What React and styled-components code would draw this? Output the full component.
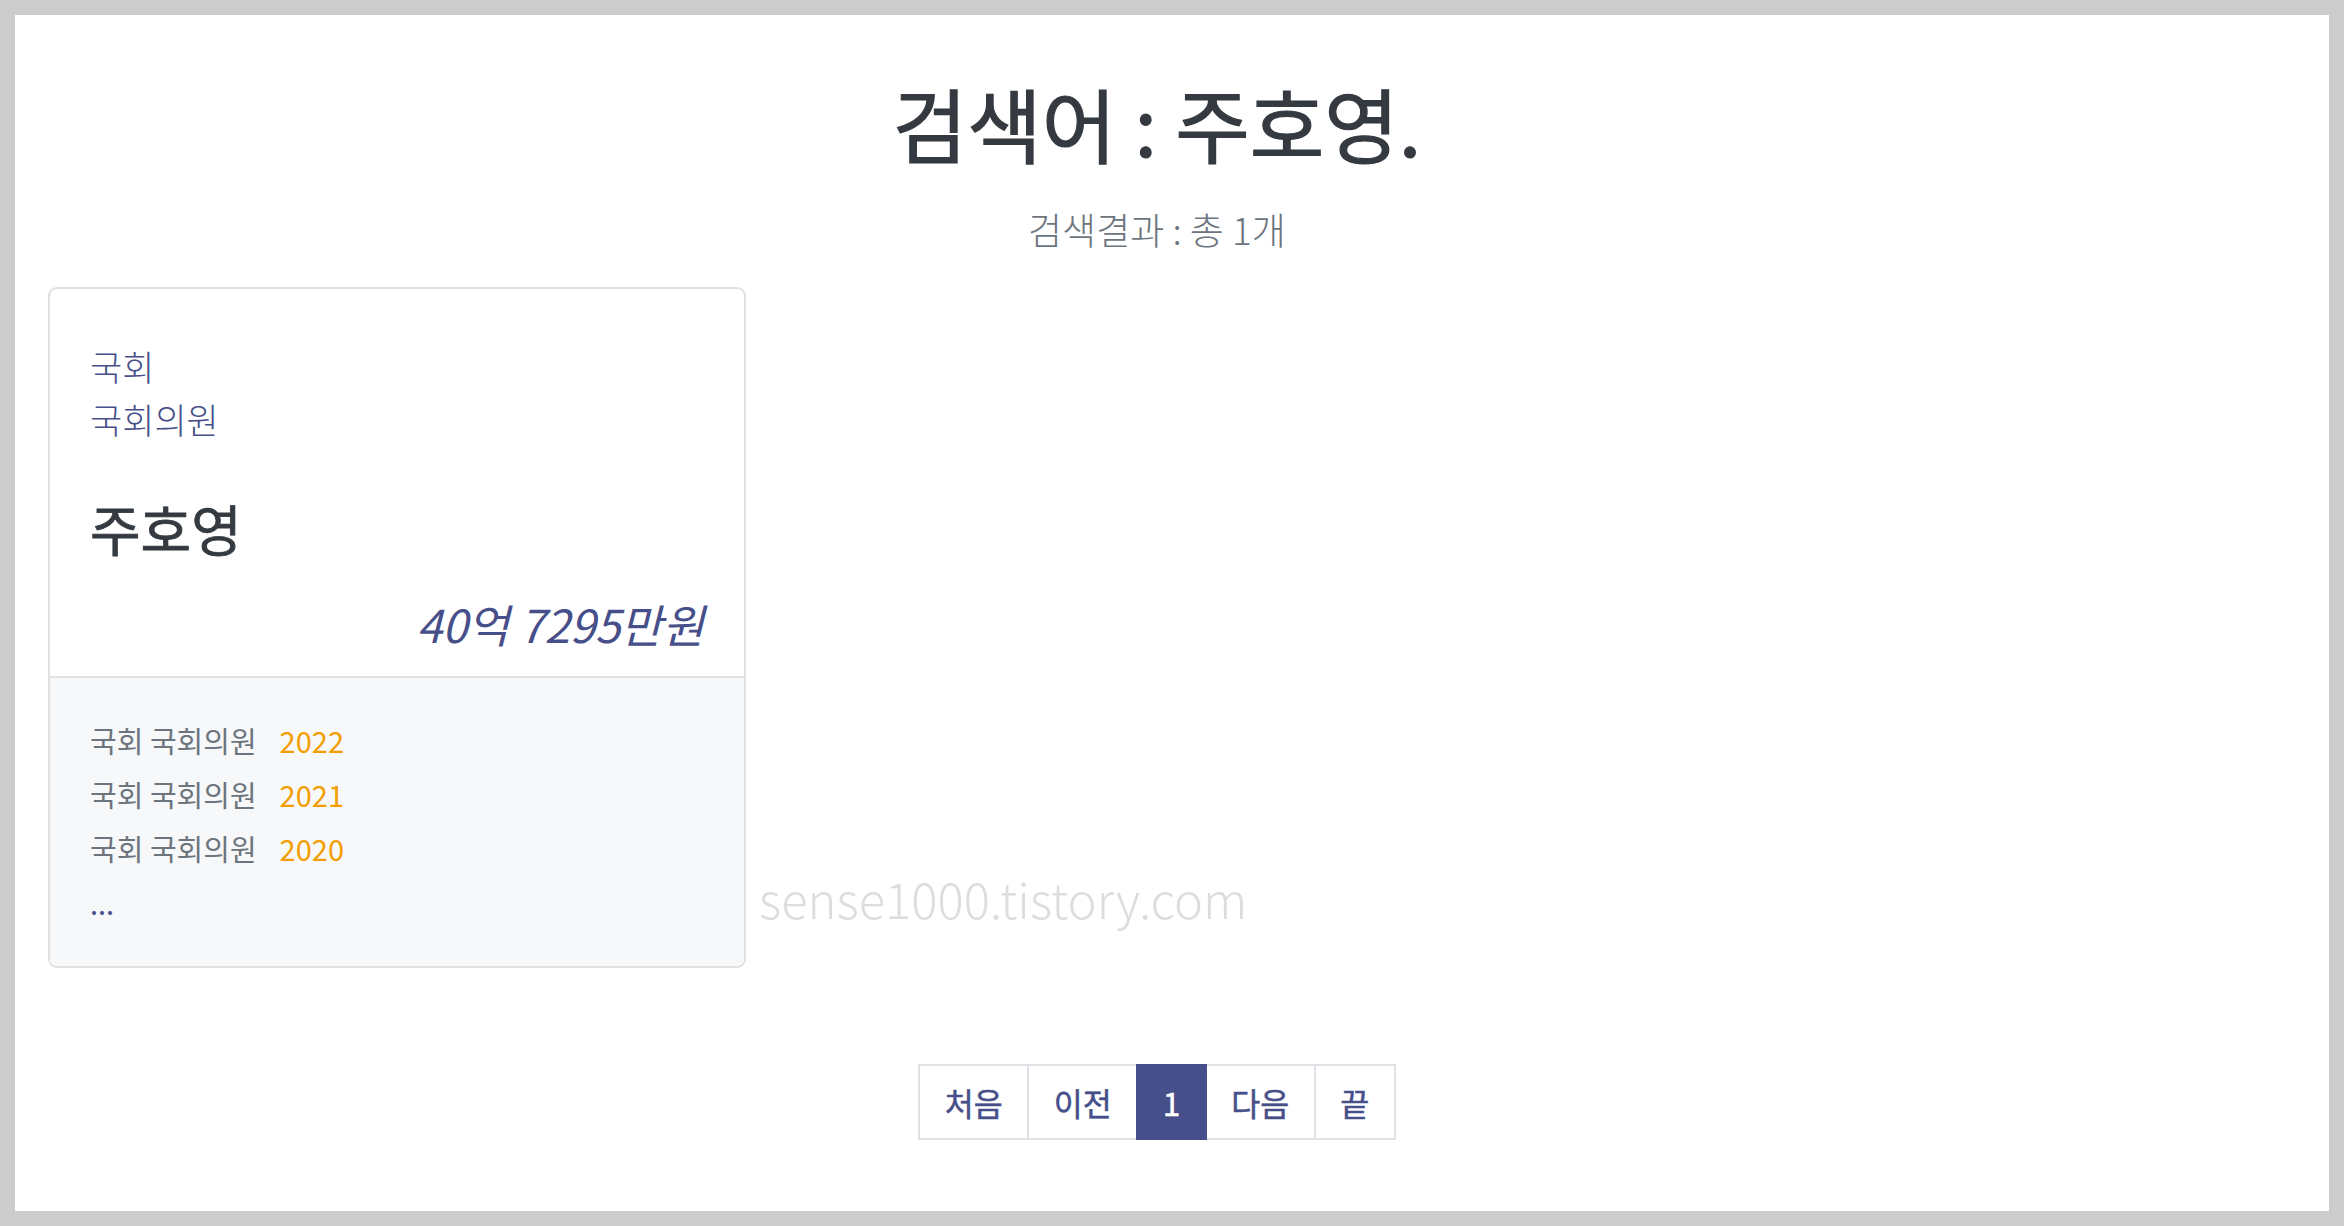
import styled, { createGlobalStyle } from 'styled-components'

const GlobalStyle = createGlobalStyle`
  html, body {
    margin: 0;
    padding: 0;
    background: #cccccc;
  }
  body {
    font-family: "Noto Sans CJK KR", "Noto Sans", sans-serif;
    color: #343a40;
  }
  * { box-sizing: border-box; }
`;

const LIGHT = `"Noto Sans CJK KR Light", "Noto Sans CJK KR DemiLight", "Noto Sans CJK KR", sans-serif`;

const records = [
  { org: '국회', role: '국회의원', year: 2022 },
  { org: '국회', role: '국회의원', year: 2021 },
  { org: '국회', role: '국회의원', year: 2020 },
];

const pages = [
  { label: '처음' },
  { label: '이전' },
  { label: '1', active: true },
  { label: '다음' },
  { label: '끝' },
];

const App = () => {
  return (
    <>
      <GlobalStyle />
      <Frame>
        <Header>
          <Title>검색어 : 주호영.</Title>
          <Summary>검색결과 : 총 1개</Summary>
        </Header>

        <Results>
          <Card>
            <CardBody>
              <Office>국회</Office>
              <Office>국회의원</Office>
              <Name>주호영</Name>
              <Amount>40억 7295만원</Amount>
            </CardBody>
            <CardFooter>
              {records.map((r) => (
                <Record key={r.year}>
                  <span>{r.org} {r.role}</span>
                  <Year>{r.year}</Year>
                </Record>
              ))}
              <More>...</More>
            </CardFooter>
          </Card>
        </Results>

        <Pagination>
          {pages.map((p) => (
            <PageItem key={p.label} $active={p.active}>{p.label}</PageItem>
          ))}
        </Pagination>

        <Watermark>sense1000.tistory.com</Watermark>
      </Frame>
    </>
  );
};

// white page inside the grey screenshot frame
const Frame = styled.main`
  position: relative;
  background: #ffffff;
  margin: 15px 15px 0 15px;
  height: 1196px;
  padding: 58px 63px 0 33px;
  display: flex;
  flex-direction: column;
`;

const Header = styled.header`
  display: flex;
  flex-direction: column;
  align-items: center;
  text-align: center;
`;

// medium weight: regular glyphs thickened a little
const Title = styled.h1`
  margin: 0;
  font-size: 81px;
  font-weight: 400;
  line-height: 98px;
  color: #343a40;
  -webkit-text-stroke: 1.2px #343a40;
`;

const Summary = styled.p`
  margin: 32px 0 0;
  font-family: ${LIGHT};
  font-size: 37px;
  font-weight: 300;
  line-height: 52px;
  color: #6c757d;
`;

const Results = styled.section`
  margin-top: 32px;
  display: flex;
  gap: 33px;
`;

const Card = styled.article`
  width: 698px;
  border: 2px solid #e0e0e0;
  border-radius: 9px;
  overflow: hidden;
  background: #ffffff;
`;

const CardBody = styled.div`
  padding: 50px 40px 26px;
  display: flex;
  flex-direction: column;
`;

const Office = styled.a`
  font-family: ${LIGHT};
  font-size: 35px;
  font-weight: 300;
  line-height: 53px;
  color: #474f8a;
  text-decoration: none;
`;

const Name = styled.h4`
  margin: 50px 0 0;
  font-size: 55px;
  font-weight: 400;
  line-height: 64px;
  color: #343a40;
  -webkit-text-stroke: 0.8px #343a40;
`;

const Amount = styled.p`
  margin: 38px 0 0;
  text-align: right;
  font-size: 45.5px;
  font-style: italic;
  font-weight: 400;
  line-height: 53px;
  color: #474f8a;
`;

const CardFooter = styled.div`
  background: #f7f8fa;
  border-top: 2px solid #e0e1e4;
  padding: 35px 40px 37px;
  display: flex;
  flex-direction: column;
`;

const Record = styled.div`
  display: flex;
  gap: 23px;
  font-size: 29px;
  line-height: 54px;
  color: #6c757d;
`;

const Year = styled.span`
  color: #f29e02;
`;

const More = styled.div`
  font-size: 29px;
  line-height: 54px;
  color: #474f8a;
`;

const Pagination = styled.nav`
  margin-top: 96px;
  align-self: center;
  display: flex;
`;

const PageItem = styled.a`
  display: flex;
  align-items: center;
  justify-content: center;
  height: 76px;
  padding: 0 24.5px;
  margin-left: -2px;
  font-size: 31.5px;
  font-weight: 400;
  color: ${(p) => (p.$active ? '#ffffff' : '#474f8a')};
  -webkit-text-stroke: 0.5px ${(p) => (p.$active ? '#ffffff' : '#474f8a')};
  background: ${(p) => (p.$active ? '#474f8a' : '#ffffff')};
  border: 2px solid ${(p) => (p.$active ? '#474f8a' : '#dee2e6')};
  position: relative;
  z-index: ${(p) => (p.$active ? 1 : 0)};
  &:first-child { margin-left: 0; }
`;

// blog watermark stamped over the screenshot
const Watermark = styled.div`
  position: absolute;
  left: 744px;
  top: 858px;
  font-family: ${LIGHT};
  font-size: 49px;
  font-weight: 300;
  line-height: 1;
  color: #dddddd;
  pointer-events: none;
`;

export default App;
